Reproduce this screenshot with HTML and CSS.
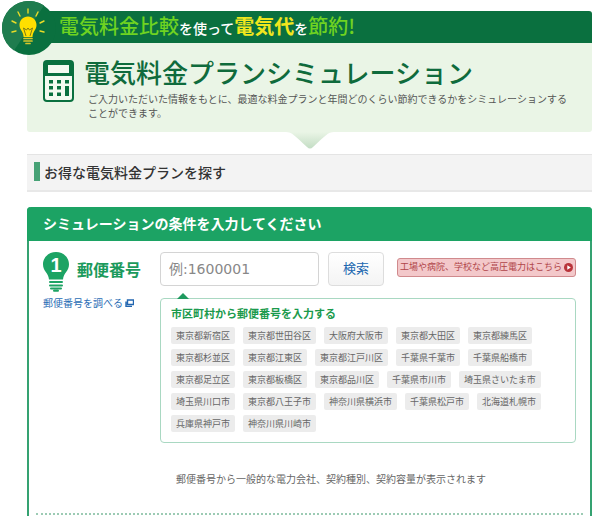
FILE: index.html
```html
<!DOCTYPE html>
<html lang="ja">
<head>
    <meta charset="UTF-8">
    <meta name="viewport" content="width=device-width, initial-scale=1.0">
    <title>電気料金プランシミュレーション</title>
    <link rel="stylesheet" href="styles.css">
</head>
<body>
    <header class="hero">
        <svg class="logo" viewBox="0 0 54 54" aria-hidden="true">
            <circle cx="27" cy="27" r="27" fill="#0a703f"/>
            <path d="M42 4.500A27 27 0 1 0 12 49.500z" fill="#1f7c4e"/>
            <g stroke="#e8dc28" stroke-width="1.400" stroke-linecap="round">
                <path d="M26 8v4M16 11l2 4M36 11l-2 4M10 20l4 2M42 20l-4 2M10 31l4-1M42 31l-4-1"/>
            </g>
            <path d="M26 15.500c-5 0-8.500 3.800-8.500 8.500 0 5 4 6.500 4 12h9c0-5.500 4-7 4-12 0-4.700-3.500-8.500-8.500-8.500z" fill="#ffdf00"/>
            <path d="M24 35l-2.500-8 3 2 1.500-2 1.500 2 3-2L28 35" fill="none" stroke="#7c7a18" stroke-width="1"/>
            <path d="M22 37.500h8M22 40h8M24 42.500h4" stroke="#d8c62a" stroke-width="1.700" stroke-linecap="round"/>
        </svg>
        <p class="catch"><em>電気料金比較</em>を使って<strong>電気代</strong>を<em>節約!</em></p>
        <div class="intro">
            <svg class="calc" viewBox="0 0 31 42" aria-hidden="true">
                <rect x="1" y="1" width="29" height="40" rx="3" fill="#f4faf0" stroke="#0a703f" stroke-width="2"/>
                <path d="M1 3a2 2 0 0 1 2-2h25a2 2 0 0 1 2 2v13H1z" fill="#0a703f"/>
                <rect x="5" y="5" width="21" height="8" fill="#f4faf0"/>
                <path d="M6 20h4v3.500H6zM14 20h4v3.500h-4zM22 20h4v3.500h-4zM6 26h4v3.500H6zM14 26h4v3.500h-4zM22 26h4v10h-4zM6 32.500h4V36H6zM14 32.500h4V36h-4z" fill="#0a703f"/>
            </svg>
            <div class="intro-text">
                <h1>電気料金プランシミュレーション</h1>
                <p>ご入力いただいた情報をもとに、最適な料金プランと年間どのくらい節約できるかをシミュレーションすることができます。</p>
            </div>
        </div>
    </header>
    <svg class="pointer" viewBox="0 0 48 17" aria-hidden="true">
        <defs>
            <linearGradient id="fade" x1="0" y1="0" x2="0" y2="1">
                <stop offset="0" stop-color="#eaf5e6"/>
                <stop offset="1" stop-color="#c3ddc4"/>
            </linearGradient>
        </defs>
        <path d="M0 0c6 0 9 4 21 15q3 3 6 0C39 4 42 0 48 0z" fill="url(#fade)"/>
    </svg>

    <h2 class="section-title">お得な電気料金プランを探す</h2>

    <main class="card">
        <h2 class="card-title">シミュレーションの条件を入力してください</h2>
        <form class="step">
            <div class="step-name">
                <div class="step-label">
                    <svg class="bulb" viewBox="0 0 26 40" aria-hidden="true">
                        <path d="M13 0C5.500 0 0 5.500 0 12.500 0 19 5.500 21 6 27.500h14C20.500 21 26 19 26 12.500 26 5.500 20.500 0 13 0z" fill="#1ca364"/>
                        <path d="M7 30h12M7 33.500h12M8 36.500h10M11 38.700h4" stroke="#1ca364" stroke-width="2" stroke-linecap="round"/>
                        <text x="13" y="20" text-anchor="middle" class="bulb-no">1</text>
                    </svg>
                    <label for="zip">郵便番号</label>
                </div>
                <a class="lookup" href="#">郵便番号を調べる<svg viewBox="0 0 9 8" aria-hidden="true"><path d="M2.500 1h6v4.500h-6zM1 2.500v5h6" fill="none" stroke="#2266b0" stroke-width="1.400"/></svg></a>
            </div>
            <div class="step-body">
                <div class="search">
                    <input type="text" id="zip" placeholder="例:1600001">
                    <button type="button">検索</button>
                    <a class="high-voltage" href="#">工場や病院、学校など高圧電力はこちら<svg viewBox="0 0 9 9" aria-hidden="true"><circle cx="4.500" cy="4.500" r="4.500" fill="#b8343a"/><path d="M3.300 2.200v4.600L6.800 4.500z" fill="#fff"/></svg></a>
                </div>
                <div class="cities">
                    <h3>市区町村から郵便番号を入力する</h3>
                    <div class="city-list">
                        <a href="#">東京都新宿区</a>
                        <a href="#">東京都世田谷区</a>
                        <a href="#">大阪府大阪市</a>
                        <a href="#">東京都大田区</a>
                        <a href="#">東京都練馬区</a>
                        <a href="#">東京都杉並区</a>
                        <a href="#">東京都江東区</a>
                        <a href="#">東京都江戸川区</a>
                        <a href="#">千葉県千葉市</a>
                        <a href="#">千葉県船橋市</a>
                        <a href="#">東京都足立区</a>
                        <a href="#">東京都板橋区</a>
                        <a href="#">東京都品川区</a>
                        <a href="#">千葉県市川市</a>
                        <a href="#">埼玉県さいたま市</a>
                        <a href="#">埼玉県川口市</a>
                        <a href="#">東京都八王子市</a>
                        <a href="#">神奈川県横浜市</a>
                        <a href="#">千葉県松戸市</a>
                        <a href="#">北海道札幌市</a>
                        <a href="#">兵庫県神戸市</a>
                        <a href="#">神奈川県川崎市</a>
                    </div>
                </div>
                <p class="note">郵便番号から一般的な電力会社、契約種別、契約容量が表示されます</p>
            </div>
        </form>
    </main>
</body>
</html>
```
FILE: styles.css
```css
* {
    box-sizing: border-box;
}
body {
    font-family: "Noto Sans CJK JP", sans-serif;
    color: #333;
    background-color: #fff;
    margin: 0;
    padding: 11px 8px 0 27px;
    min-height: 100vh;
    display: flex;
    flex-direction: column;
}
h1, h2, h3, p {
    margin: 0;
}
a {
    text-decoration: none;
}
.hero {
    position: relative;
    background-color: #eaf5e6;
    border-radius: 3px;
}
.logo {
    position: absolute;
    left: -25px;
    top: -10px;
    width: 54px;
    height: 54px;
}
.catch {
    background-color: #0a703f;
    border-radius: 3px 3px 0 0;
    color: #fff;
    font-size: 14px;
    font-weight: 500;
    line-height: 32px;
    height: 32px;
    padding-left: 32px;
}
.catch em, .catch strong {
    font-size: 20px;
    font-style: normal;
    font-weight: 500;
    line-height: 30px;
    color: #6fd321;
}
.catch strong {
    font-weight: 700;
    color: #f0e61e;
}
.intro {
    display: flex;
    gap: 12px;
    padding: 12px 8px 12px 16px;
}
.calc {
    flex: none;
    width: 31px;
    height: 42px;
    margin-top: 5px;
}
.intro h1 {
    color: #0f6b3c;
    font-size: 26px;
    font-weight: 500;
    line-height: 34px;
    margin-left: -2px;
}
.intro p {
    font-size: 10px;
    line-height: 14px;
    color: #555;
    padding: 3px 8px 0 2px;
}
.pointer {
    display: block;
    width: 48px;
    height: 17px;
    margin: 0 auto;
}
.section-title {
    display: flex;
    align-items: center;
    gap: 4px;
    margin-top: 5px;
    padding: 0 7px;
    height: 38px;
    background-color: #f3f3f3;
    border-top: 1px solid #e4e4e4;
    border-bottom: 2px solid #e8e8e8;
    font-size: 14px;
    font-weight: 500;
    line-height: 18px;
    padding-bottom: 2px;
}
.section-title::before {
    content: "";
    width: 6px;
    height: 19px;
    background-color: #47a276;
}
.card {
    flex: 1;
    margin-top: 15px;
    border: 2px solid #35a271;
    border-top: none;
    border-bottom: none;
    border-radius: 4px 4px 0 0;
}
.card-title {
    margin: 0 -2px;
    padding: 0 16px 2px;
    background-color: #1ca364;
    border-radius: 4px 4px 0 0;
    color: #fff;
    font-size: 14px;
    line-height: 32px;
}
.step {
    display: flex;
    margin: 0 7px;
    padding: 11px 7px 26px;
    border-bottom: 2px dotted #9ccbb4;
}
.step-name {
    flex: none;
    width: 117px;
}
.step-label {
    display: flex;
    gap: 8px;
    color: #1b9a5c;
    font-size: 16px;
    font-weight: 700;
    line-height: 34px;
}
.bulb {
    width: 26px;
    height: 40px;
}
.bulb-no {
    font: bold 20px "Liberation Sans", sans-serif;
    fill: #fff;
}
.lookup {
    display: flex;
    align-items: center;
    gap: 2px;
    margin-top: 4px;
    color: #2a6db5;
    font-size: 10px;
    line-height: 14px;
}
.lookup svg {
    width: 9px;
    height: 8px;
}
.step-body {
    flex: 1;
    min-width: 0;
}
.search {
    display: flex;
    align-items: center;
    gap: 9px;
}
.search input {
    flex: 1;
    min-width: 0;
    height: 34px;
    padding: 0 8px;
    border: 1px solid #d4d4d4;
    border-radius: 4px;
    font-family: "DejaVu Sans", "Noto Sans CJK JP", sans-serif;
    font-size: 14px;
}
.search input::placeholder {
    color: #888;
}
.search button {
    width: 56px;
    height: 34px;
    padding: 0 0 3px;
    background-color: #fff;
    background-image: linear-gradient(#fff, #f4f4f4);
    border: 1px solid #ddd;
    border-radius: 4px;
    color: #2067b0;
    font-family: "Noto Sans CJK JP", sans-serif;
    font-size: 13px;
}
.high-voltage {
    display: flex;
    align-items: center;
    justify-content: center;
    gap: 2px;
    width: 179px;
    height: 19px;
    margin: 0 0 4px 4px;
    background-color: #f3c8ca;
    border: 1px solid #d08a8d;
    border-radius: 3px;
    color: #b04448;
    font-size: 9px;
    line-height: 16px;
    white-space: nowrap;
}
.high-voltage svg {
    width: 9px;
    height: 9px;
}
.cities {
    position: relative;
    margin-top: 12px;
    padding: 5px 10px 10px;
    border: 1px solid #a9d8c2;
    border-radius: 4px;
}
.cities::before {
    content: "";
    position: absolute;
    left: 16px;
    top: -6px;
    border: 6px solid transparent;
    border-top: none;
    border-bottom-color: #1f9a5f;
}
.cities h3 {
    color: #1b9a4c;
    font-size: 11px;
    line-height: 18px;
}
.city-list {
    display: flex;
    flex-wrap: wrap;
    gap: 5px 8px;
    margin-top: 5px;
}
.city-list a {
    padding: 0 5px;
    background-color: #ececec;
    border-radius: 2px;
    color: #666;
    font-size: 9px;
    line-height: 17px;
}
.note {
    margin-top: 28px;
    padding-left: 16px;
    color: #666;
    font-size: 10px;
    line-height: 16px;
}
```
